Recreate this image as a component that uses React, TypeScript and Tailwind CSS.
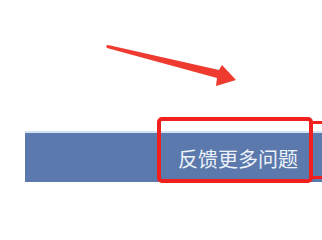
export default function App() {
  return (
    <div className="relative w-[322px] h-[202px] overflow-hidden bg-white">
      <svg width="322" height="131" viewBox="0 0 322 131" className="block">
        <polygon
          points="106,46 108,45 219,70 222,65 236,80 216,86 217,78 107,48"
          fill="#ef3a2f"
        />
      </svg>

      <div className="ml-[25px] h-[51px] bg-[#5b79ac] border-t-2 border-[#d3e2f4] flex items-center justify-end pr-[24px] pt-[3px]">
        <span className="text-[20px] leading-none text-[#eef3fa] font-['Noto_Sans_CJK_SC',sans-serif]">
          反馈更多问题
        </span>
      </div>

      {/* highlight box */}
      <div className="absolute left-[157px] top-[117px] w-[156px] h-[66px] border-4 border-[#f21f1f] rounded-[5px]" />
      <div className="absolute left-[313px] top-[121px] w-[9px] h-[3px] bg-[#f21f1f]" />
      <div className="absolute left-[313px] top-[176px] w-[9px] h-[3px] bg-[#f21f1f]" />
    </div>
  );
}
